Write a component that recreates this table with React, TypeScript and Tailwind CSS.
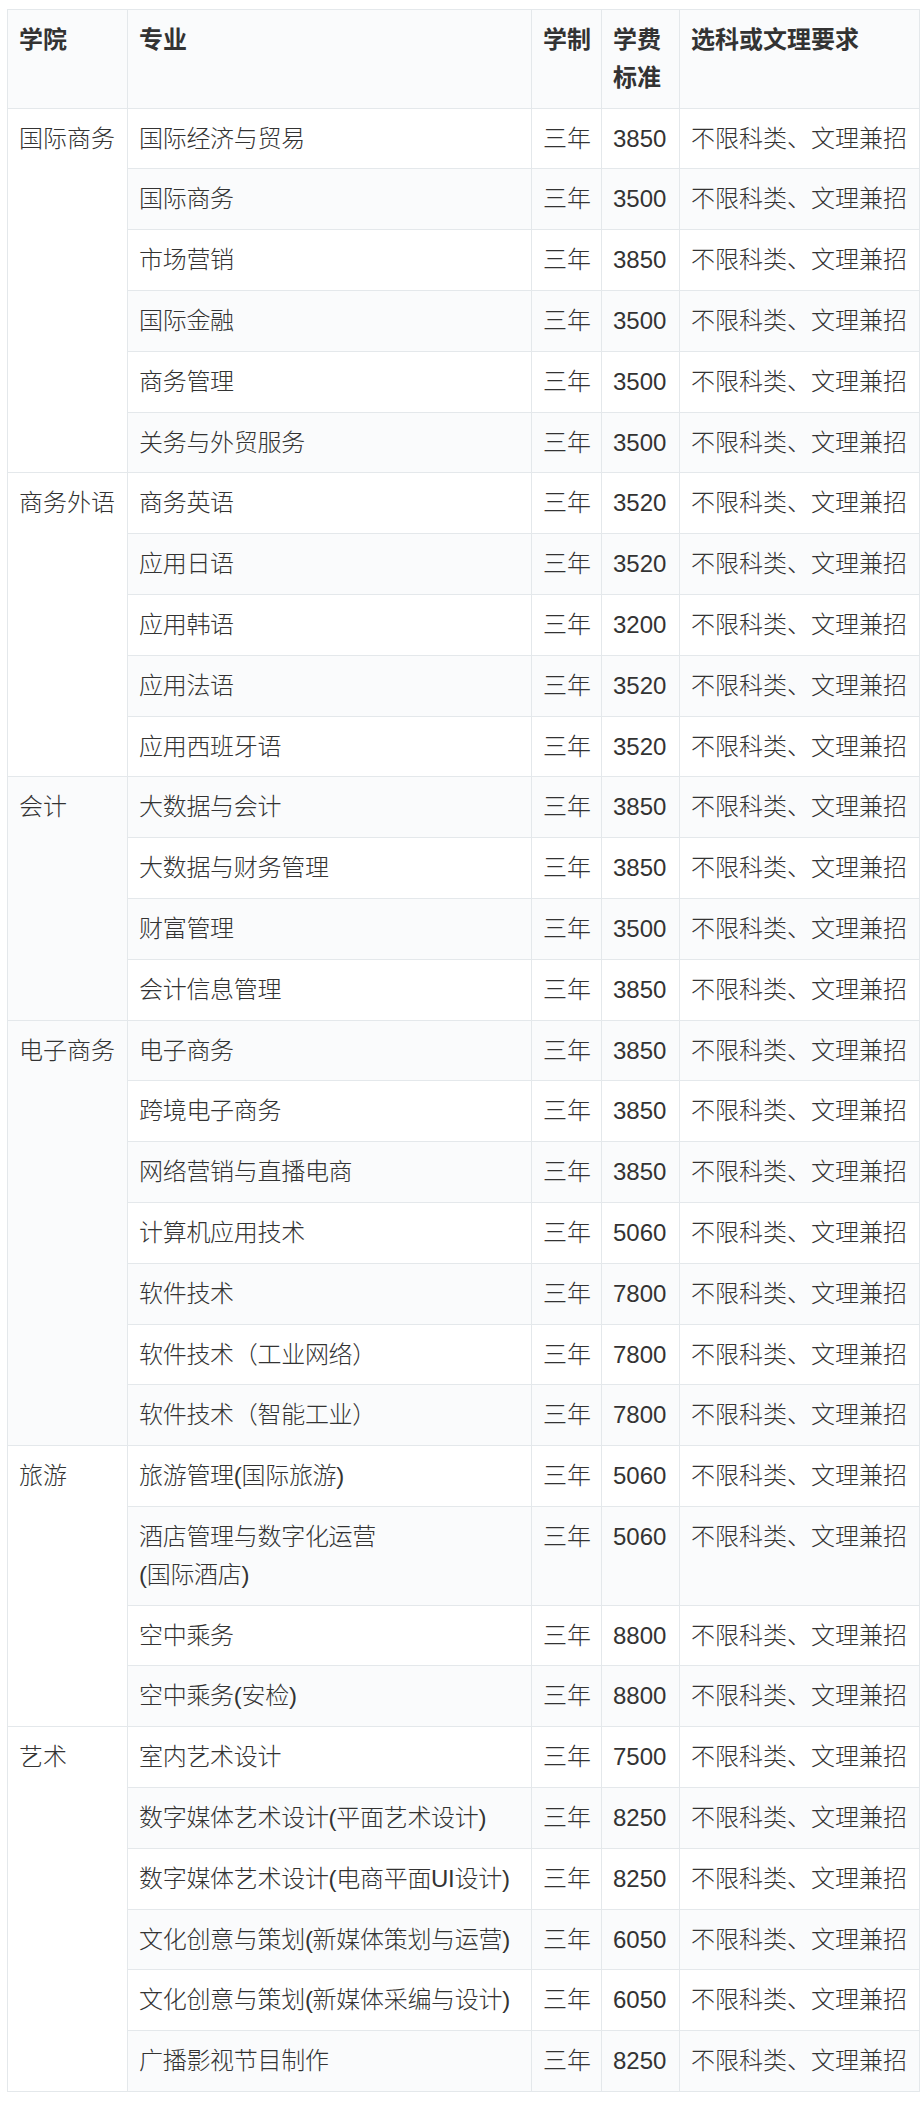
import React from "react";

type Row = { major: string; fee: string };
const groups: { college: string; rows: Row[] }[] = [
  {
    college: "国际商务",
    rows: [
      { major: "国际经济与贸易", fee: "3850" },
      { major: "国际商务", fee: "3500" },
      { major: "市场营销", fee: "3850" },
      { major: "国际金融", fee: "3500" },
      { major: "商务管理", fee: "3500" },
      { major: "关务与外贸服务", fee: "3500" },
    ],
  },
  {
    college: "商务外语",
    rows: [
      { major: "商务英语", fee: "3520" },
      { major: "应用日语", fee: "3520" },
      { major: "应用韩语", fee: "3200" },
      { major: "应用法语", fee: "3520" },
      { major: "应用西班牙语", fee: "3520" },
    ],
  },
  {
    college: "会计",
    rows: [
      { major: "大数据与会计", fee: "3850" },
      { major: "大数据与财务管理", fee: "3850" },
      { major: "财富管理", fee: "3500" },
      { major: "会计信息管理", fee: "3850" },
    ],
  },
  {
    college: "电子商务",
    rows: [
      { major: "电子商务", fee: "3850" },
      { major: "跨境电子商务", fee: "3850" },
      { major: "网络营销与直播电商", fee: "3850" },
      { major: "计算机应用技术", fee: "5060" },
      { major: "软件技术", fee: "7800" },
      { major: "软件技术（工业网络）", fee: "7800" },
      { major: "软件技术（智能工业）", fee: "7800" },
    ],
  },
  {
    college: "旅游",
    rows: [
      { major: "旅游管理(国际旅游)", fee: "5060" },
      { major: "酒店管理与数字化运营\n(国际酒店)", fee: "5060" },
      { major: "空中乘务", fee: "8800" },
      { major: "空中乘务(安检)", fee: "8800" },
    ],
  },
  {
    college: "艺术",
    rows: [
      { major: "室内艺术设计", fee: "7500" },
      { major: "数字媒体艺术设计(平面艺术设计)", fee: "8250" },
      { major: "数字媒体艺术设计(电商平面UI设计)", fee: "8250" },
      { major: "文化创意与策划(新媒体策划与运营)", fee: "6050" },
      { major: "文化创意与策划(新媒体采编与设计)", fee: "6050" },
      { major: "广播影视节目制作", fee: "8250" },
    ],
  },
];

const td =
  "border border-[#e4e8eb] px-[11px] py-[11px] align-top leading-[37.8px] text-[24px] font-light whitespace-nowrap";
const th =
  "border border-[#e4e8eb] px-[11px] py-[11px] align-top leading-[37.8px] text-[24px] font-bold text-left text-[#333] whitespace-nowrap";

export default function App() {
  let idx = 0;
  return (
    <div
      className="bg-white pt-[9px] pl-[7px] pb-[10px]"
      style={{ fontFamily: '"Liberation Sans", "Noto Sans CJK SC", sans-serif' }}
    >
      <table className="w-[912px] table-fixed border-collapse text-[#333]">
        <colgroup>
          <col className="w-[120px]" />
          <col className="w-[404px]" />
          <col className="w-[70px]" />
          <col className="w-[78px]" />
          <col className="w-[240px]" />
        </colgroup>
        <thead>
          <tr className="bg-[#fafbfc]">
            <th className={th}>学院</th>
            <th className={th}>专业</th>
            <th className={th}>学制</th>
            <th className={th}>
              学费
              <br />
              标准
            </th>
            <th className={th}>选科或文理要求</th>
          </tr>
        </thead>
        <tbody>
          {groups.map((g) =>
            g.rows.map((r, i) => {
              idx += 1;
              const even = idx % 2 === 0;
              const lines = r.major.split("\n");
              return (
                <tr key={g.college + i} className={even ? "bg-[#fafbfc]" : "bg-white"}>
                  {i === 0 && (
                    <td className={td} rowSpan={g.rows.length}>
                      {g.college}
                    </td>
                  )}
                  <td className={td + " tracking-[-0.3px]"}>
                    {lines.map((l, k) => (
                      <React.Fragment key={k}>
                        {k > 0 && <br />}
                        {l}
                      </React.Fragment>
                    ))}
                  </td>
                  <td className={td}>三年</td>
                  <td className={td}>{r.fee}</td>
                  <td className={td}>不限科类、文理兼招</td>
                </tr>
              );
            })
          )}
        </tbody>
      </table>
    </div>
  );
}
